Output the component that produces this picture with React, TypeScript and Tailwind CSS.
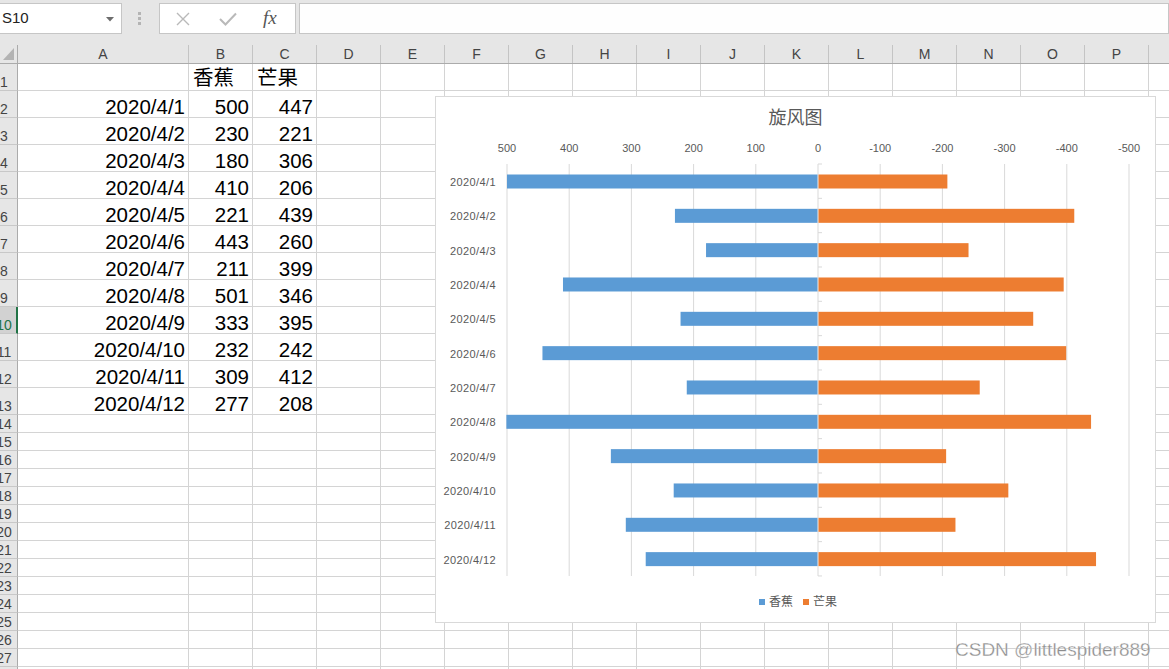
import React from "react";

const FONT = '"Liberation Sans", "Noto Sans CJK SC", sans-serif';

const COLS: { l: string; w: number }[] = [
  { l: "A", w: 171 },
  ...["B", "C", "D", "E", "F", "G", "H", "I", "J", "K", "L", "M", "N", "O", "P", "Q"].map((l) => ({ l, w: 64 })),
];

const DATA: [string, string, string][] = [
  ["", "香蕉", "芒果"],
  ["2020/4/1", "500", "447"],
  ["2020/4/2", "230", "221"],
  ["2020/4/3", "180", "306"],
  ["2020/4/4", "410", "206"],
  ["2020/4/5", "221", "439"],
  ["2020/4/6", "443", "260"],
  ["2020/4/7", "211", "399"],
  ["2020/4/8", "501", "346"],
  ["2020/4/9", "333", "395"],
  ["2020/4/10", "232", "242"],
  ["2020/4/11", "309", "412"],
  ["2020/4/12", "277", "208"],
];

const ROWS = Array.from({ length: 28 }, (_, i) => ({ n: i + 1, h: i < 13 ? 27 : 18 }));

const CATS = DATA.slice(1).map((r) => r[0]);
const BLUE = [500, 230, 180, 410, 221, 443, 211, 501, 333, 232, 309, 277];
const ORANGE = [208, 412, 242, 395, 346, 399, 260, 439, 206, 306, 221, 447];

function TopBar() {
  return (
    <div className="h-[45px] bg-[#e6e6e6] pt-[3px]">
      <div className="flex h-[31px]">
        <div className="relative flex w-[122px] items-center border-y border-r border-[#c6c6c6] bg-white pl-[2px] text-[15px] text-[#222]" style={{ fontFamily: FONT }}>
          S10
          <svg className="absolute left-[106px] top-[13px]" width="8" height="5" viewBox="0 0 8 5">
            <path d="M0 0 L8 0 L4 4.5 Z" fill="#6d6d6d" />
          </svg>
        </div>
        <div className="flex w-[37px] flex-col items-center justify-center gap-[2px] pr-[2px]">
          <div className="h-[3px] w-[3px] bg-[#b4b4b4]" />
          <div className="h-[3px] w-[3px] bg-[#b4b4b4]" />
          <div className="h-[3px] w-[3px] bg-[#b4b4b4]" />
        </div>
        <div className="flex w-[137px] items-center border border-[#c6c6c6] bg-white">
          <svg className="ml-[16px]" width="14" height="14" viewBox="0 0 14 14">
            <path d="M1 1 L13 13 M13 1 L1 13" stroke="#b9b9b9" strokeWidth="1.4" fill="none" />
          </svg>
          <svg className="ml-[29px]" width="18" height="14" viewBox="0 0 18 14">
            <path d="M1 7 L6.5 12.5 L17 1.5" stroke="#b9b9b9" strokeWidth="2" fill="none" />
          </svg>
          <span className="ml-[26px] text-[19px] italic text-[#555]" style={{ fontFamily: '"Liberation Serif", serif' }}>
            fx
          </span>
        </div>
        <div className="ml-[3px] flex-1 border border-[#c6c6c6] bg-[#fefefe]" />
      </div>
    </div>
  );
}

function ColHeader() {
  return (
    <div className="flex h-[19px] border-b border-[#ababab] bg-[#e6e6e6]">
      <div className="relative w-[18px] shrink-0 border-r border-[#ababab]">
        <svg className="absolute left-[3px] top-[3px]" width="11" height="12" viewBox="0 0 11 12">
          <path d="M11 0 L11 12 L0 12 Z" fill="#b3b3b3" />
        </svg>
      </div>
      {COLS.map((c) => (
        <div
          key={c.l}
          className="flex shrink-0 items-center justify-center border-r border-[#c4c4c4] text-[14px] text-[#444]"
          style={{ width: c.w, fontFamily: FONT }}
        >
          {c.l}
        </div>
      ))}
    </div>
  );
}

function Grid() {
  return (
    <div>
      {ROWS.map((r) => {
        const sel = r.n === 10;
        const d = DATA[r.n - 1];
        return (
          <div key={r.n} className="flex" style={{ height: r.h }}>
            <div
              className={
                "w-[18px] shrink-0 overflow-hidden border-b border-[#c8c8c8] " +
                (sel ? "border-r-2 border-r-[#217346] bg-[#d2d2d2] text-[#217346]" : "border-r border-r-[#ababab] bg-[#e6e6e6] text-[#444]")
              }
            >
              <div className="-ml-[9px] flex h-full w-[26px] items-end justify-center pb-[1px] text-[14px] leading-[14px]" style={{ fontFamily: FONT }}>
                {r.n}
              </div>
            </div>
            {COLS.map((c, ci) => {
              const v = d && ci < 3 ? d[ci] : "";
              const isHead = r.n === 1;
              return (
                <div
                  key={c.l}
                  className={
                    "flex shrink-0 items-end border-r border-b border-[#d4d4d4] bg-white text-[20.5px] leading-[20px] text-black " +
                    (isHead ? "justify-start pb-[2px] pl-[4px]" : "justify-end pr-[3px]")
                  }
                  style={{ width: c.w, fontFamily: FONT }}
                >
                  {v}
                </div>
              );
            })}
          </div>
        );
      })}
    </div>
  );
}

function Chart() {
  const cx = 382;
  const s = 0.622;
  const band = 34.33;
  const ticks = [-5, -4, -3, -2, -1, 0, 1, 2, 3, 4, 5];
  return (
    <div className="absolute left-[435px] top-[96px] flex h-[527px] w-[721px] flex-col border border-[#d9d9d9] bg-white">
      <div className="pt-[9px] text-center text-[18px] leading-[24px] text-[#595959]" style={{ fontFamily: FONT }}>
        旋风图
      </div>
      <svg width="719" height="460" viewBox="0 0 719 460" style={{ fontFamily: FONT }}>
        {ticks.map((k) => {
          const x = cx + k * 62.2;
          const label = k === 0 ? "0" : k < 0 ? String(-k * 100) : "-" + k * 100;
          return (
            <g key={k}>
              <line x1={x} y1={34} x2={x} y2={446} stroke="#d9d9d9" strokeWidth="1" />
              <text x={x} y={22} textAnchor="middle" fontSize="11" fill="#595959">
                {label}
              </text>
            </g>
          );
        })}
        {Array.from({ length: 13 }, (_, i) => (
          <line key={i} x1={cx} y1={34 + i * band} x2={cx + 4} y2={34 + i * band} stroke="#d9d9d9" strokeWidth="1" />
        ))}
        {CATS.map((c, i) => {
          const y = 44.5 + i * band;
          return (
            <g key={c}>
              <text x={60} y={56 + i * band} textAnchor="end" fontSize="11" letterSpacing="0.4" fill="#595959">
                {c}
              </text>
              <rect x={cx - BLUE[i] * s} y={y} width={BLUE[i] * s - 0.5} height={14} fill="#5b9bd5" />
              <rect x={cx + 0.5} y={y} width={ORANGE[i] * s - 0.5} height={14} fill="#ed7d31" />
            </g>
          );
        })}
      </svg>
      <div className="mt-[4px] flex items-center justify-center pl-[5px] text-[12px] leading-[16px] text-[#595959]" style={{ fontFamily: FONT }}>
        <div className="mr-[4px] h-[6px] w-[6px] bg-[#5b9bd5]" />
        <span>香蕉</span>
        <div className="ml-[10px] mr-[4px] h-[6px] w-[6px] bg-[#ed7d31]" />
        <span>芒果</span>
      </div>
    </div>
  );
}

export default function App() {
  return (
    <div className="relative h-[669px] w-[1169px] overflow-hidden bg-white">
      <TopBar />
      <ColHeader />
      <Grid />
      <Chart />
      <div
        className="absolute left-[955px] top-[640px] whitespace-nowrap text-[19px] leading-[19px] text-[#8c8c8c]"
        style={{ fontFamily: FONT, WebkitTextStroke: "0.3px #ffffff" }}
      >
        CSDN @littlespider889
      </div>
    </div>
  );
}
